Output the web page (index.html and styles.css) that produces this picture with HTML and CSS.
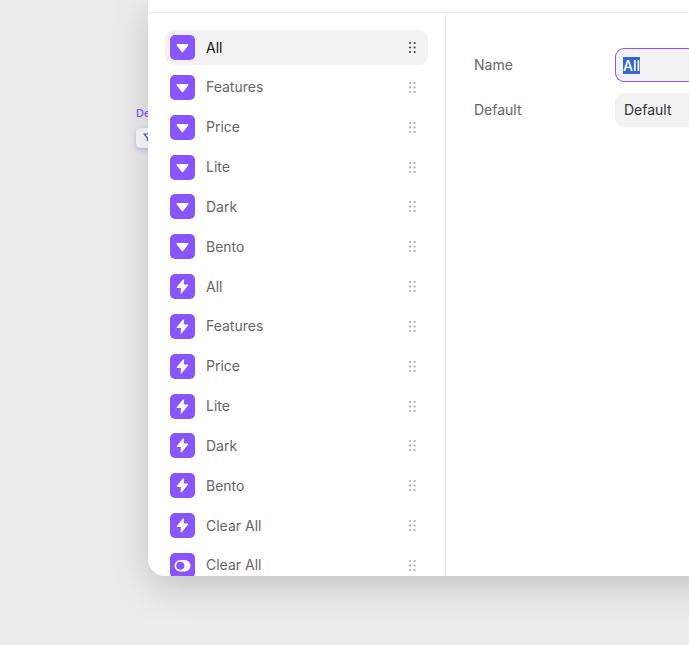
FILE: index.html
```html
<!DOCTYPE html>
<html lang="en">
<head>
<meta charset="utf-8">
<title>Variables</title>
<link rel="stylesheet" href="styles.css">
</head>
<body>
<svg class="sprite" aria-hidden="true">
  <symbol id="dropdown" viewBox="0 0 25 25"><path d="M7.300 9.700h10.400L12.500 16.500z" fill="#fff" stroke="#fff" stroke-width="1.600" stroke-linejoin="round"/></symbol>
  <symbol id="bolt" viewBox="0 0 25 25"><path d="M13.400 6 7.300 13.500h4.300l-.4 5.300 6.400-7.600h-4.500z" fill="#fff" stroke="#fff" stroke-width="1.200" stroke-linejoin="round"/></symbol>
  <symbol id="toggle" viewBox="0 0 25 25"><rect x="4.500" y="7" width="16" height="11.500" rx="5.750" fill="#fff"/><circle cx="10.300" cy="12.750" r="4.100" fill="#8855ff"/></symbol>
  <symbol id="grip" viewBox="0 0 9 13"><circle cx="2" cy="2" r="1.100"/><circle cx="6.600" cy="2" r="1.100"/><circle cx="2" cy="6.500" r="1.100"/><circle cx="6.600" cy="6.500" r="1.100"/><circle cx="2" cy="11" r="1.100"/><circle cx="6.600" cy="11" r="1.100"/></symbol>
</svg>
<div class="frame">
  <span class="frame-label">De</span>
  <span class="frame-chip"><svg width="12" height="12" viewBox="0 0 12 12" aria-hidden="true"><path d="M1 2h10L7.500 6v4l-3-1.500V6z" fill="none" stroke="#3366ee" stroke-width="1.200" stroke-linejoin="round"/></svg></span>
</div>
<main class="dialog">
  <header class="dialog-header"></header>
  <div class="dialog-body">
    <nav class="sidebar">
      <ul class="list">
        <li><button class="row selected" type="button"><svg class="icon"><use href="#dropdown"/></svg><span>All</span><svg class="grip"><use href="#grip"/></svg></button></li>
        <li><button class="row" type="button"><svg class="icon"><use href="#dropdown"/></svg><span>Features</span><svg class="grip"><use href="#grip"/></svg></button></li>
        <li><button class="row" type="button"><svg class="icon"><use href="#dropdown"/></svg><span>Price</span><svg class="grip"><use href="#grip"/></svg></button></li>
        <li><button class="row" type="button"><svg class="icon"><use href="#dropdown"/></svg><span>Lite</span><svg class="grip"><use href="#grip"/></svg></button></li>
        <li><button class="row" type="button"><svg class="icon"><use href="#dropdown"/></svg><span>Dark</span><svg class="grip"><use href="#grip"/></svg></button></li>
        <li><button class="row" type="button"><svg class="icon"><use href="#dropdown"/></svg><span>Bento</span><svg class="grip"><use href="#grip"/></svg></button></li>
        <li><button class="row" type="button"><svg class="icon"><use href="#bolt"/></svg><span>All</span><svg class="grip"><use href="#grip"/></svg></button></li>
        <li><button class="row" type="button"><svg class="icon"><use href="#bolt"/></svg><span>Features</span><svg class="grip"><use href="#grip"/></svg></button></li>
        <li><button class="row" type="button"><svg class="icon"><use href="#bolt"/></svg><span>Price</span><svg class="grip"><use href="#grip"/></svg></button></li>
        <li><button class="row" type="button"><svg class="icon"><use href="#bolt"/></svg><span>Lite</span><svg class="grip"><use href="#grip"/></svg></button></li>
        <li><button class="row" type="button"><svg class="icon"><use href="#bolt"/></svg><span>Dark</span><svg class="grip"><use href="#grip"/></svg></button></li>
        <li><button class="row" type="button"><svg class="icon"><use href="#bolt"/></svg><span>Bento</span><svg class="grip"><use href="#grip"/></svg></button></li>
        <li><button class="row" type="button"><svg class="icon"><use href="#bolt"/></svg><span>Clear All</span><svg class="grip"><use href="#grip"/></svg></button></li>
        <li><button class="row" type="button"><svg class="icon"><use href="#toggle"/></svg><span>Clear All</span><svg class="grip"><use href="#grip"/></svg></button></li>
      </ul>
    </nav>
    <form class="fields">
      <div class="field">
        <label for="name">Name</label>
        <input id="name" class="control name" type="text" value="All" autocomplete="off">
      </div>
      <div class="field">
        <label for="default">Default</label>
        <select id="default" class="control"><option>Default</option></select>
      </div>
    </form>
  </div>
</main>
<script src="script.js"></script>
</body>
</html>
```
FILE: styles.css
```css
* {
  box-sizing: border-box;
}

html {
  overflow: hidden;
}

body {
  position: relative;
  margin: 0;
  height: 100vh;
  padding: 0 0 69px 148px;
  overflow: hidden;
  background: #ededed;
  color: #666;
  font: 400 14px/20px Inter, sans-serif;
}

.sprite {
  position: absolute;
  width: 0;
  height: 0;
}

/* Canvas frame lying behind the dialog */
.frame {
  position: absolute;
  top: 106px;
  left: 136px;
  display: grid;
  gap: 8px;
  color: #8855ff;
  font-size: 11px;
  font-weight: 500;
  line-height: 14px;
}

.frame-chip {
  display: flex;
  align-items: center;
  width: 40px;
  height: 20px;
  padding-left: 7px;
  border-radius: 5px;
  background: #fff;
  box-shadow: 0 2px 4px rgba(51, 102, 238, 0.3);
}

.dialog {
  position: relative;
  z-index: 0;
  display: flex;
  flex-direction: column;
  height: 100%;
}

/* Backdrop reaches past the window edge so its shadow stays even there */
.dialog::before {
  content: "";
  position: absolute;
  z-index: -1;
  inset: 0 -80px 0 0;
  border-bottom-left-radius: 17px;
  background: #fff;
  box-shadow: 0 10px 40px rgba(0, 0, 0, 0.19);
}

.dialog-header {
  height: 13px;
  flex: none;
  border-bottom: 1px solid #eee;
}

.dialog-body {
  display: flex;
  flex: 1;
  min-height: 0;
  overflow: hidden;
  border-bottom-left-radius: 17px;
}

.sidebar {
  display: flex;
  flex: none;
  width: 298px;
  padding: 17px 17px 0;
  border-right: 1px solid #eee;
}

.list {
  display: flex;
  flex: 1;
  flex-direction: column;
  justify-content: space-between;
  margin: 0 0 -7px;
  padding: 0;
  list-style: none;
}

.row {
  display: flex;
  align-items: center;
  gap: 11px;
  width: 100%;
  height: 35px;
  padding: 0 11px 0 5px;
  border: 0;
  border-radius: 9px;
  background: none;
  color: inherit;
  font: inherit;
  text-align: left;
}

.row.selected {
  background: #f2f2f2;
  color: #111;
}

.icon {
  flex: none;
  width: 25px;
  height: 25px;
  border-radius: 5px;
  background: #8855ff;
}

.grip {
  width: 9px;
  height: 13px;
  margin-left: auto;
  fill: #aaa;
}

.selected .grip {
  fill: #444;
}

.fields {
  display: flex;
  flex: 1;
  flex-direction: column;
  gap: 11px;
  min-width: 0;
  padding: 35px 0 0 28px;
}

.field {
  display: grid;
  grid-template-columns: 141px 1fr;
  align-items: center;
}

.control {
  width: 100%;
  min-width: 0;
  height: 34px;
  margin: 0;
  padding: 0 8px;
  appearance: none;
  border: 1px solid #f2f2f2;
  border-right: 0;
  border-radius: 9px 0 0 9px;
  outline: 0;
  background: #f2f2f2;
  color: #333;
  font: inherit;
}

.control.name {
  padding: 0 7px;
  border-color: #8855ff;
  font-weight: 500;
}

.name::selection {
  background: #3367d1;
  color: #fff;
}
```
FILE: script.js
```js
const nameInput = document.getElementById("name");
nameInput.focus();
nameInput.select();
```
